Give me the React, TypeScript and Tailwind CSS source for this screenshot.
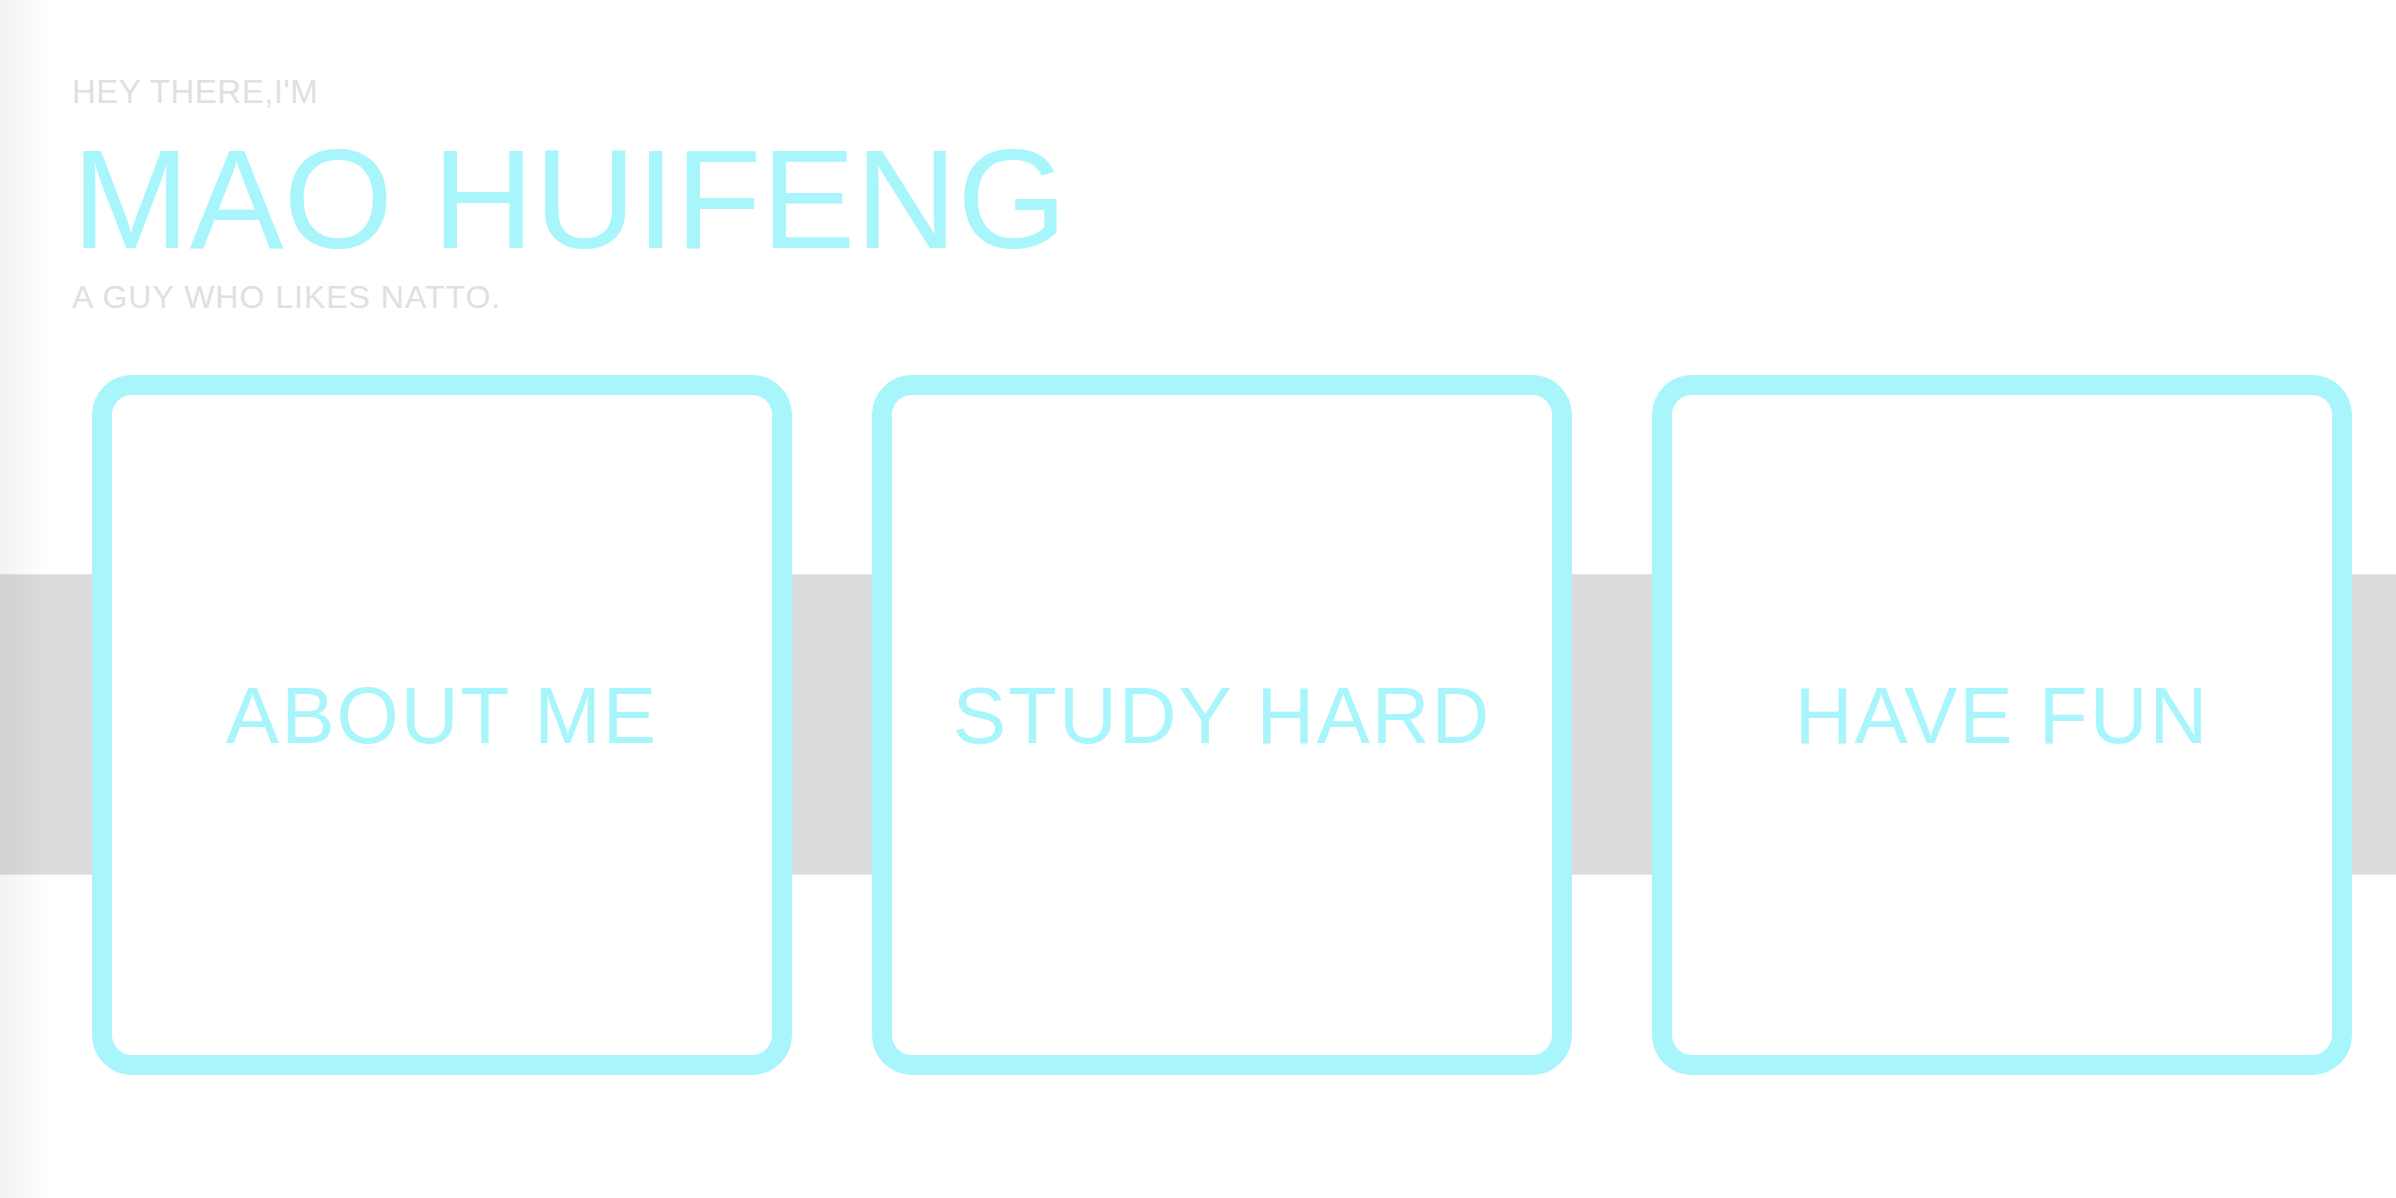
import React from "react";

const cards = ["ABOUT ME", "STUDY HARD", "HAVE FUN"];

export default function App() {
  return (
    <div
      className="relative w-[2396px] h-[1198px] overflow-hidden bg-white"
      style={{ fontFamily: '"Liberation Sans", Arial, Helvetica, sans-serif' }}
    >
      <header className="pl-[72px] pt-[75px] flex flex-col">
        <p className="text-[33px] leading-none text-[#e0e0e0] tracking-[0.5px]">HEY THERE,I'M</p>
        <h1 className="mt-[21px] text-[141px] leading-none text-[#a8f6fc] font-normal">MAO HUIFENG</h1>
        <p className="mt-[11px] text-[32px] leading-none text-[#e0e0e0] tracking-[1px]">A GUY WHO LIKES NATTO.</p>
      </header>

      <section className="mt-[62px] h-[700px] flex gap-[80px] pl-[92px] bg-[linear-gradient(to_bottom,transparent_199px,#e6e6e6_199px,#e6e6e6_200px,#dcdcdc_200px,#dcdcdc_499px,#e6e6e6_499px,#e6e6e6_500px,transparent_500px)]">
        {cards.map((c) => (
          <div
            key={c}
            className="w-[700px] h-[700px] shrink-0 rounded-[40px] border-[20px] border-[#a8f6fc] bg-white flex items-center justify-center pb-[18px]"
          >
            <span className="text-[80px] leading-none text-[#a8f6fc] tracking-[2px]">{c}</span>
          </div>
        ))}
      </section>

      <div className="pointer-events-none absolute left-0 top-0 h-full w-[50px] bg-linear-to-r from-black/5 to-transparent" />
    </div>
  );
}
